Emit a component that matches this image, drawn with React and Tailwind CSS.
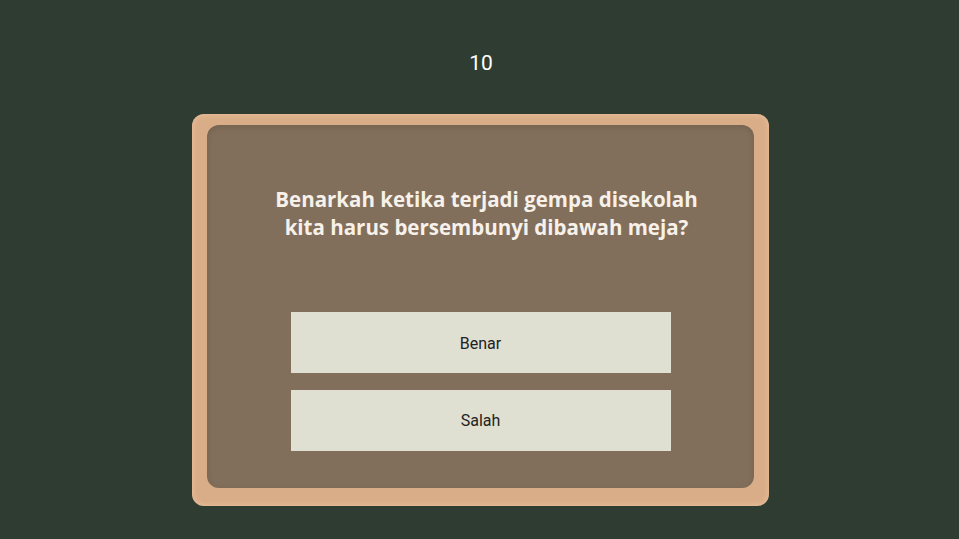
export default function App() {
  return (
    <div className="w-[959px] h-[539px] bg-[#2e3c32] flex flex-col items-center overflow-hidden">
      <div className="mt-[50px] ml-[3px] h-[26px] leading-[26px] text-[21px] text-white" style={{ fontFamily: "Roboto, sans-serif" }}>
        10
      </div>
      <div className="mt-[38px] ml-[2px] w-[577px] h-[392px] rounded-[12px] bg-[#d9ad87] pt-[11px] pb-[18px] px-[15px] shadow-[inset_0_0_6px_rgba(240,200,165,0.8)]">
        <div className="w-full h-full rounded-[12px] bg-[#826f5b] flex flex-col items-center pt-[60px] shadow-[inset_0_2px_6px_rgba(0,0,0,0.12)]">
          <div
            className="pl-[12px] text-center text-[20.5px] leading-[28px] font-bold text-[#f7f1ea] whitespace-nowrap"
            style={{ fontFamily: "'Open Sans', Lato, sans-serif" }}
          >
            Benarkah ketika terjadi gempa disekolah
            <br />
            kita harus bersembunyi dibawah meja?
          </div>
          <div className="mt-[71px] flex flex-col gap-[17px]" style={{ fontFamily: "Roboto, sans-serif" }}>
            <div className="w-[380px] h-[61px] bg-[#dfe0d2] flex items-center justify-center pt-[3px] text-[16px] text-[#222222]">
              Benar
            </div>
            <div className="w-[380px] h-[61px] bg-[#dfe0d2] flex items-center justify-center text-[16px] text-[#222222]">
              Salah
            </div>
          </div>
        </div>
      </div>
    </div>
  );
}
